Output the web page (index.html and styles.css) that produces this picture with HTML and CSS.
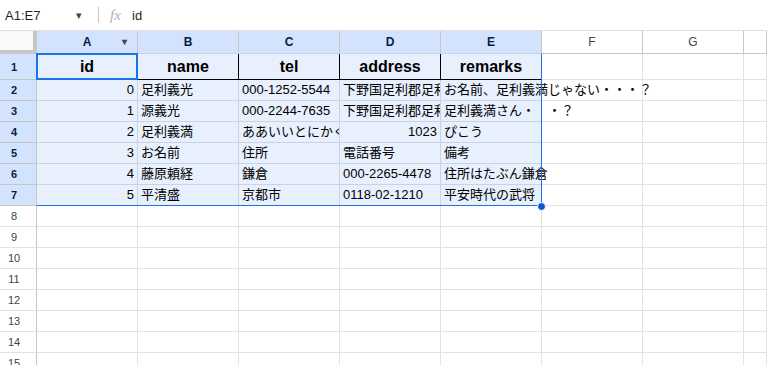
FILE: index.html
```html
<!DOCTYPE html>
<html lang="ja">
<head>
    <meta charset="UTF-8">
    <title>Sheet</title>
    <link rel="stylesheet" href="styles.css">
</head>
<body>
    <div class="formula-bar">
        <div class="name-box">A1:E7</div>
        <div class="name-arrow">&#9662;</div>
        <div class="divider"></div>
        <div class="fx">fx</div>
        <div class="formula">id</div>
    </div>

    <div class="sheet" id="sheet">
        <div class="selection"></div>
        <div class="active-cell"></div>
        <div class="fill-handle"></div>
    </div>

    <script>
        const sheet = document.getElementById('sheet');
        const letters = ['A', 'B', 'C', 'D', 'E', 'F', 'G', ''];

        // row 1 is the header of the data, numbers in column A go right
        const data = [
            ['id', 'name', 'tel', 'address', 'remarks'],
            ['0', '足利義光', '000-1252-5544', '下野国足利郡足利町', 'お名前、足利義満じゃない・・・？'],
            ['1', '源義光', '000-2244-7635', '下野国足利郡足利町', '足利義満さん・　・？'],
            ['2', '足利義満', 'ああいいとにかくながい', '1023', 'ぴこう'],
            ['3', 'お名前', '住所', '電話番号', '備考'],
            ['4', '藤原頼経', '鎌倉', '000-2265-4478', '住所はたぶん鎌倉'],
            ['5', '平清盛', '京都市', '0118-02-1210', '平安時代の武将']
        ];
        const overflow = ['1-4', '2-4', '5-4'];

        function cell(cls, text) {
            const div = document.createElement('div');
            div.className = cls;
            div.textContent = text;
            sheet.appendChild(div);
            return div;
        }

        cell('corner', '');
        letters.forEach((l, i) => {
            const head = cell('col-head' + (i < 5 ? ' picked' : ''), l);
            if (i === 0) {
                const arrow = document.createElement('span');
                arrow.className = 'col-arrow';
                arrow.innerHTML = '&#9662;';
                head.appendChild(arrow);
            }
        });

        for (let r = 0; r < 15; r++) {
            cell('row-head' + (r < 7 ? ' picked' : ''), r + 1);
            for (let c = 0; c < 8; c++) {
                const row = data[r];
                let cls = 'cell';
                if (r < 7 && c < 5) cls += ' picked';
                if (r === 0 && c < 5) cls += ' title';
                let text = row && c < 5 ? row[c] : '';
                if (r > 0 && (c === 0 || text === '1023')) cls += ' num';
                if (overflow.includes(r + '-' + c)) cls += ' spill';
                cell(cls, text);
            }
        }
    </script>
</body>
</html>
```

FILE: styles.css
```css
* {
    margin: 0;
    padding: 0;
    box-sizing: border-box;
}

body {
    background-color: #fff;
    font-family: Arial, "Liberation Sans", "Noto Sans CJK JP", sans-serif;
    color: #000;
    overflow: hidden;
    height: 365px;
}

.formula-bar {
    height: 31px;
    display: flex;
    align-items: center;
    border-bottom: 1px solid #e1e1e1;
    font-size: 13px;
}

.name-box {
    width: 76px;
    padding-left: 5px;
    color: #1f1f1f;
}

.name-arrow {
    width: 22px;
    font-size: 11px;
    color: #444;
}

.divider {
    width: 1px;
    height: 16px;
    background: #c4c7c5;
}

.fx {
    margin-left: 11px;
    width: 22px;
    font-family: "Liberation Serif", serif;
    font-style: italic;
    font-size: 15px;
    color: #b0b0b0;
}

.formula {
    color: #1f1f1f;
}

.sheet {
    position: relative;
    display: grid;
    grid-template-columns: 37px repeat(7, 101px) 1fr;
    grid-template-rows: 23px 26px repeat(14, 21px);
}

.corner {
    background: #f8f9fa;
    border-right: 4px solid #c4c7c5;
    border-bottom: 4px solid #c4c7c5;
}

.col-head {
    position: relative;
    display: flex;
    align-items: center;
    justify-content: center;
    font-size: 12px;
    color: #444;
    border-right: 1px solid #c4c7c5;
    border-bottom: 1px solid #c4c7c5;
}

.col-head.picked {
    background: #d3e3fd;
    color: #041e49;
    font-weight: bold;
}

.col-arrow {
    position: absolute;
    right: 10px;
    top: 5px;
    font-size: 10px;
    color: #444;
}

.row-head {
    display: flex;
    align-items: center;
    justify-content: center;
    padding-right: 8px;
    font-size: 11px;
    color: #444;
    border-right: 1px solid #c4c7c5;
    border-bottom: 1px solid #e1e1e1;
}

.row-head.picked {
    background: #d3e3fd;
    color: #041e49;
    font-weight: bold;
    border-bottom-color: #c4c7c5;
}

.cell {
    font-size: 13px;
    line-height: 20px;
    padding: 0 3px;
    white-space: nowrap;
    overflow: hidden;
    border-right: 1px solid #e1e1e1;
    border-bottom: 1px solid #e1e1e1;
}

.cell.picked {
    background: #e8f0fe;
    border-color: #c8d3e6;
}

.cell.title {
    font-size: 16px;
    font-weight: bold;
    line-height: 25px;
    text-align: center;
    border-color: #000;
}

.cell.num {
    text-align: right;
}

.cell.spill {
    overflow: visible;
    z-index: 1;
}

.selection {
    position: absolute;
    left: 36px;
    top: 22px;
    width: 506px;
    height: 153px;
    border: 1px solid #1a73e8;
    border-left-color: #c4c7c5;
    border-top-color: #c8d3e6;
    z-index: 2;
    pointer-events: none;
}

.active-cell {
    position: absolute;
    left: 36px;
    top: 22px;
    width: 102px;
    height: 27px;
    border: 2px solid #1a73e8;
    z-index: 3;
}

.fill-handle {
    position: absolute;
    left: 537px;
    top: 171px;
    width: 9px;
    height: 9px;
    border-radius: 50%;
    background: #0b57d0;
    border: 1px solid #fff;
    z-index: 4;
}
```
